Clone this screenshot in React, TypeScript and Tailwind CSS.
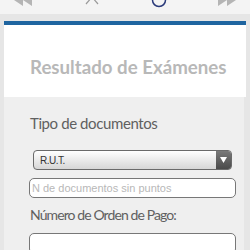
import React from "react";

export default function App() {
  return (
    <div className="w-[250px] h-[250px] overflow-hidden bg-[#e6e6e6] flex flex-col font-[Lato,sans-serif]">
      {/* top toolbar */}
      <div className="h-[14px] bg-[#f4f4f4] relative shrink-0">
        <svg className="absolute left-[14px] top-[-6px]" width="18" height="12" viewBox="0 0 18 12">
          <path d="M9 0 L0 6 L9 12 Z M18 0 L9 6 L18 12 Z" fill="#b5b5b5" />
        </svg>
        <svg className="absolute left-[85px] top-[-5px]" width="14" height="10" viewBox="0 0 14 10">
          <path d="M1 9 L7 2 L13 9" stroke="#9a9a9a" strokeWidth="1.2" fill="none" />
        </svg>
        <svg className="absolute left-[151px] top-[-8px]" width="16" height="16" viewBox="0 0 16 16">
          <circle cx="8" cy="8" r="6.5" stroke="#2a3a7a" strokeWidth="1.5" fill="none" />
        </svg>
        <svg className="absolute left-[218px] top-[-6px]" width="18" height="12" viewBox="0 0 18 12">
          <path d="M0 0 L9 6 L0 12 Z M9 0 L18 6 L9 12 Z" fill="#b5b5b5" />
        </svg>
      </div>
      <div className="h-[7px] shrink-0" />
      <div className="mx-[4px] flex-1 flex flex-col">
        <div className="h-[4px] bg-[#1f65a0] shrink-0" />
        <div className="bg-white h-[72px] shrink-0 flex items-end pl-[26px] pb-[20px]">
          <span className="text-[18.7px] font-bold text-[#b8b8b8] leading-none">Resultado de Exámenes</span>
        </div>
        <div className="flex-1 bg-[#efefef] mr-[2px] pl-[25px] pr-[8px] pt-[17px]">
          <div className="pl-[1px] text-[15px] tracking-[-0.4px] text-[#606060] leading-[18px]">Tipo de documentos</div>
          <div className="mt-[18px] ml-[4px] mr-[4px] h-[20px] rounded-[4px] border border-[#6a6a6a] bg-gradient-to-b from-white to-[#d6d6d6] flex items-center overflow-hidden">
            <span className="flex-1 pl-[6px] text-[10px] tracking-[-0.5px] text-[#333] pt-[1px] [font-family:'Liberation_Sans',Arial,sans-serif]">R.U.T.</span>
            <div className="w-[15px] h-full bg-gradient-to-b from-[#7a7a7a] to-[#4a4a4a] flex items-center justify-center">
              <svg width="7" height="6" viewBox="0 0 7 6"><path d="M0 0 L7 0 L3.5 6 Z" fill="white" /></svg>
            </div>
          </div>
          <div className="mt-[8px] h-[20px] rounded-[5px] border border-[#777] bg-white flex items-center">
            <span className="pl-[2px] text-[11px] text-[#b8b8b8] [font-family:'Liberation_Sans',Arial,sans-serif]">N de documentos sin puntos</span>
          </div>
          <div className="mt-[8px] pl-[1px] text-[14px] tracking-[-0.9px] text-[#606060] leading-[18px]">Número de Orden de Pago:</div>
          <div className="mt-[9px] h-[21px] rounded-[5px] border border-[#777] bg-white" />
        </div>
      </div>
    </div>
  );
}
